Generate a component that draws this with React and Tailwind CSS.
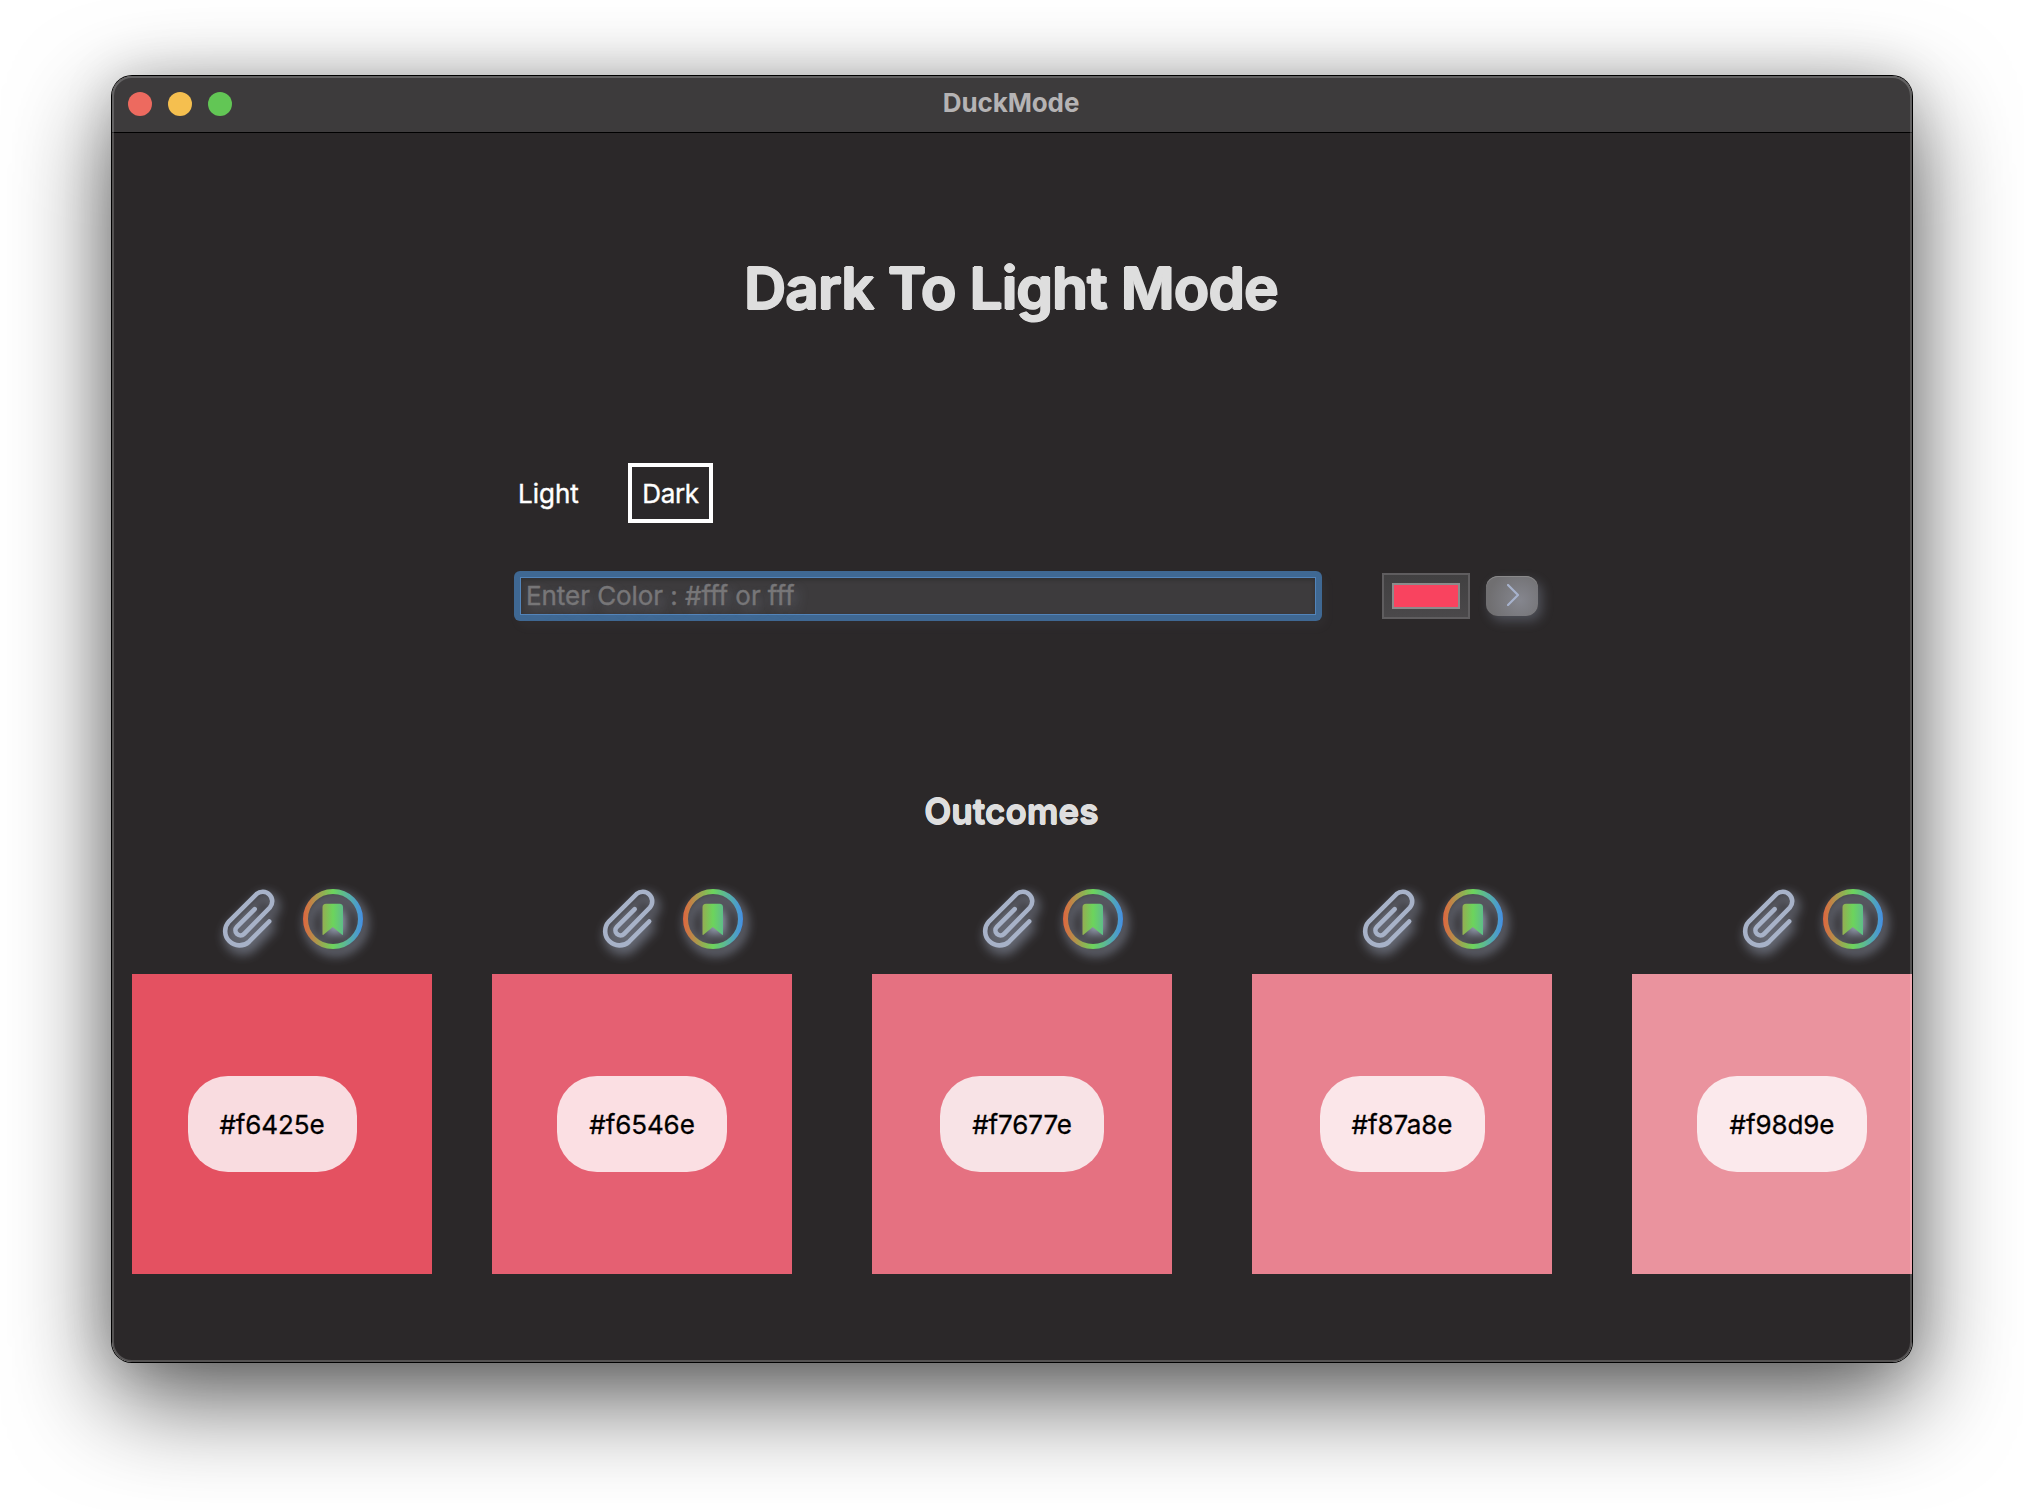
const outcomes = [
  { hex: "#f6425e", tile: "bg-[#e45161] ml-5", pill: "w-[169px] -ml-5 bg-[#f9dce0]" },
  { hex: "#f6546e", tile: "bg-[#e56072]", pill: "w-[170px] bg-[#fbdfe3]" },
  { hex: "#f7677e", tile: "bg-[#e57181]", pill: "w-[164px] bg-[#f8e3e6]" },
  { hex: "#f87a8e", tile: "bg-[#e88290]", pill: "w-[165px] bg-[#fbe6e9]" },
  { hex: "#f98d9e", tile: "bg-[#ea939e]", pill: "w-[170px] bg-[#fbe9ec]" },
];

function PaperclipIcon() {
  return (
    <svg width="52" height="59" viewBox="103 29 52 59" fill="none" stroke="#a7b2c8" strokeWidth="4.6" strokeLinecap="round" className="overflow-visible drop-shadow-[3px_5px_6px_rgba(180,191,216,0.85)]">
      <path d="M149.2 61.5 L129.1 81.7 A14.3 14.3 0 0 1 108.9 61.5 L136.5 34.1 A9.5 9.5 0 0 1 149.9 47.5 L124.1 73.9 A5 5 0 0 1 116.9 66.8 L134.7 49.1" />
    </svg>
  );
}

function BookmarkIcon({ id }) {
  return (
    <svg width="60" height="60" viewBox="0 0 60 60" className="overflow-visible drop-shadow-[3px_5px_6px_rgba(180,191,216,0.85)]">
      <defs>
        <linearGradient id={id} gradientUnits="userSpaceOnUse" x1="0" y1="30" x2="60" y2="30">
          <stop offset="0" stopColor="#e0653f" />
          <stop offset="0.5" stopColor="#6cd45c" />
          <stop offset="1" stopColor="#448fe6" />
        </linearGradient>
      </defs>
      <circle cx="30" cy="30" r="27.5" fill="none" stroke={`url(#${id})`} strokeWidth="5" />
      <path d="M23 14.7 H36.5 Q40 14.7 40 18.2 V45 Q40 46.6 38.8 45.4 L29.8 38 L20.7 45.4 Q19.5 46.6 19.5 45 V18.2 Q19.5 14.7 23 14.7 Z" fill={`url(#${id})`} />
    </svg>
  );
}

function Outcome({ item, index }) {
  return (
    <div className="flex w-[300px] shrink-0 flex-col">
      <div className="flex h-[86px] items-start gap-7 pt-px pl-[111px]">
        <PaperclipIcon />
        <BookmarkIcon id={`ring-${index}`} />
      </div>
      <div className={`flex size-[300px] items-center justify-center ${item.tile}`}>
        <div className={`flex h-24 items-center justify-center rounded-[40px] text-[26px] tracking-[-0.1px] text-black [-webkit-text-stroke:0.3px_#000] ${item.pill}`}>{item.hex}</div>
      </div>
    </div>
  );
}

export default function App() {
  return (
    <div className="h-[1510px] w-[2024px] overflow-hidden bg-white pt-[76px] pl-28 font-['Inter',sans-serif]">
      <div className="relative h-[1286px] w-[1800px] rounded-[20px] shadow-[0_0_0_1px_#000,0_0_50px_rgba(0,0,0,0.15),0_36px_100px_rgba(0,0,0,0.65)]">
        <div className="flex h-full w-full flex-col overflow-hidden rounded-[20px] bg-[#2b2829]">
          <header className="relative flex h-[57px] shrink-0 items-center border-b border-black bg-[#3d3b3c] pl-4">
            <div className="flex gap-4">
              <span className="size-6 rounded-full bg-[#ed6a5f]" />
              <span className="size-6 rounded-full bg-[#f5bf4f]" />
              <span className="size-6 rounded-full bg-[#62c655]" />
            </div>
            <h1 className="absolute inset-x-0 top-0 pr-0.5 text-center text-[26px] leading-[54px] font-bold tracking-[-0.1px] text-[#b5b3b4]">DuckMode</h1>
          </header>

          <h2 className="mt-[119px] h-[73px] pr-0.5 text-center text-[58px] leading-[72px] font-semibold tracking-[-0.6px] text-[#dedede] [text-shadow:1.2px_0_#dedede,-1.2px_0_#dedede,0_1px_#dedede,0_-1px_#dedede]">Dark To Light Mode</h2>

          <nav className="mt-[138px] ml-[406px] flex h-[60px] items-center text-[26px] text-white [-webkit-text-stroke:0.4px_#fff]">
            <span className="w-[110px]">Light</span>
            <span className="flex h-[60px] w-[85px] items-center justify-center border-4 border-white tracking-[-0.3px]">Dark</span>
          </nav>

          <div className="mt-12 ml-[402px] flex h-[50px] items-center">
            <div className="h-[50px] w-[808px] rounded-md bg-[#3f6893] p-1.5 shadow-[4px_6px_12px_rgba(167,178,205,0.04)]">
              <div className="flex h-[38px] items-center border border-[#5284ba] bg-[#3d3b3d] pb-0.5 pl-[5px] text-[26px] tracking-[-0.06px] text-[#777678] shadow-[inset_0_2px_4px_rgba(0,0,0,0.2)] [-webkit-text-stroke:0.4px_#777678] [text-shadow:5px_6px_12px_rgba(167,178,205,0.3)]">Enter Color : #fff or fff</div>
            </div>
            <div className="ml-[60px] h-[46px] w-[88px] border-2 border-[#5f5d5f] bg-linear-to-b from-[#414041] to-[#4a484a] p-2">
              <div className="h-[26px] w-[68px] border-2 border-[#8c8b8c] bg-[#f9435f]" />
            </div>
            <button className="ml-4 flex h-10 w-[52px] items-center justify-center rounded-xl bg-[radial-gradient(circle_at_65%_60%,#85868e,#706f71_75%)] shadow-[4px_5px_12px_rgba(167,178,205,0.3),inset_0_1px_#8a898a]">
              <svg width="12" height="22" viewBox="0 0 12 22" fill="none" stroke="#a7b2cc" strokeWidth="2.2" strokeLinecap="round" strokeLinejoin="round" className="ml-0.5 -mt-0.5">
                <path d="M1 1 L11 11 L1 21" />
              </svg>
            </button>
          </div>

          <h3 className="mt-[167px] h-[46px] pr-px text-center text-[35px] leading-[46px] font-semibold tracking-[0.1px] text-[#dedede] [text-shadow:0.6px_0_#dedede,-0.6px_0_#dedede,0_0.6px_#dedede,0_-0.6px_#dedede]">Outcomes</h3>

          <div className="mt-[54px] flex gap-20">
            {outcomes.map((item, i) => (
              <Outcome key={item.hex} item={item} index={i} />
            ))}
          </div>
        </div>
        <div className="pointer-events-none absolute inset-0 rounded-[20px] border-2 border-white/20" />
      </div>
    </div>
  );
}
